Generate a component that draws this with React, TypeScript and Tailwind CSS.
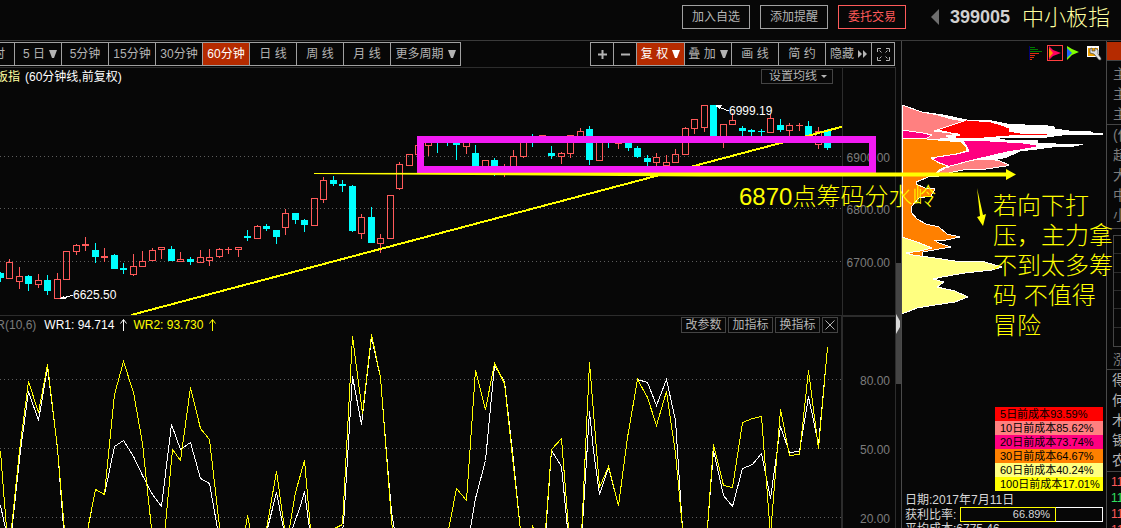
import type { ReactNode } from 'react';
import clsx from 'clsx';

// [left, high, bodyTop, bodyBottom, low, 1 = up / 0 = down]
type Candle = [number, number, number, number, number, number];

const candles: Candle[] = [
  [-3, 272, 273, 278, 282, 0], [6, 259, 262, 279, 279, 1], [16, 267, 276, 282, 289, 1],
  [25, 275, 276, 284, 291, 0], [35, 274, 280, 285, 288, 1], [44, 275, 280, 291, 295, 0],
  [54, 273, 279, 299, 299, 1], [63, 251, 251, 280, 280, 1], [73, 244, 245, 252, 255, 1],
  [82, 237, 244, 246, 251, 1], [92, 243, 250, 257, 263, 0], [101, 248, 256, 258, 262, 1],
  [111, 254, 255, 269, 269, 0], [120, 263, 268, 270, 274, 0], [130, 254, 266, 275, 276, 1],
  [139, 251, 261, 267, 267, 1], [149, 248, 250, 261, 261, 1], [158, 247, 247, 250, 259, 1],
  [168, 246, 249, 261, 261, 0], [177, 252, 259, 262, 262, 1], [187, 257, 259, 262, 265, 0],
  [197, 250, 257, 263, 263, 1], [206, 249, 257, 261, 266, 1], [216, 248, 249, 257, 258, 1],
  [225, 247, 249, 250, 254, 1], [235, 247, 247, 250, 257, 1], [244, 230, 236, 238, 241, 0],
  [254, 225, 226, 239, 239, 1], [263, 224, 226, 229, 231, 0], [273, 230, 230, 237, 244, 0],
  [282, 209, 213, 228, 235, 1], [292, 213, 213, 220, 224, 0], [301, 219, 220, 225, 232, 0],
  [311, 198, 198, 226, 226, 1], [320, 177, 180, 200, 203, 1], [330, 176, 180, 184, 186, 0],
  [339, 180, 184, 186, 192, 0], [349, 185, 186, 231, 232, 0], [358, 214, 217, 234, 239, 1],
  [368, 207, 217, 243, 243, 0], [377, 234, 238, 244, 253, 1], [387, 195, 195, 239, 239, 1],
  [396, 162, 164, 189, 190, 1], [406, 154, 154, 166, 166, 1], [415, 145, 145, 155, 155, 1],
  [425, 140, 141, 146, 156, 1], [434, 138, 138, 142, 153, 0], [444, 138, 138, 142, 146, 0],
  [453, 138, 138, 145, 160, 0], [463, 138, 139, 147, 154, 1], [472, 145, 153, 168, 168, 0],
  [482, 160, 160, 170, 170, 1], [491, 158, 160, 168, 176, 0], [501, 164, 167, 171, 177, 1],
  [510, 150, 156, 170, 170, 1], [520, 138, 138, 157, 158, 1], [529, 134, 137, 142, 147, 0],
  [539, 135, 135, 142, 142, 1], [548, 146, 153, 156, 159, 0], [558, 152, 153, 157, 164, 1],
  [567, 135, 135, 154, 158, 1], [577, 128, 131, 137, 137, 1], [586, 126, 129, 160, 165, 0],
  [596, 138, 140, 161, 161, 1], [605, 138, 138, 142, 148, 0], [615, 138, 139, 144, 149, 1],
  [625, 138, 140, 148, 151, 0], [634, 146, 148, 157, 158, 0], [644, 155, 158, 162, 166, 0],
  [653, 153, 157, 163, 166, 1], [663, 155, 162, 166, 166, 1], [672, 149, 154, 163, 163, 1],
  [682, 127, 128, 155, 155, 1], [691, 119, 119, 129, 134, 1], [701, 105, 105, 128, 132, 1],
  [710, 105, 105, 138, 138, 0], [720, 124, 124, 142, 148, 1], [729, 113, 120, 125, 125, 1],
  [739, 126, 128, 131, 136, 0], [748, 129, 130, 132, 136, 0], [758, 129, 131, 132, 136, 0],
  [767, 114, 118, 133, 133, 1], [777, 119, 125, 130, 132, 0], [786, 123, 125, 131, 136, 1],
  [796, 123, 125, 126, 131, 1], [805, 121, 126, 136, 136, 0], [815, 127, 131, 145, 149, 1],
  [824, 129, 131, 148, 150, 0],
];

const wr1 =
  '0,505 5,528 11,532 20,450 28,391 38,420 47,367 57,448 64,540 87,530 95,489 104,494 114,446 123,440 133,456 142,475 152,494 161,506 171,424 180,449 190,442 200,478 209,483 217,528 222,540 264,540 276,492 283,528 288,540 292,528 300,505 304,491 309,528 312,540 340,540 343,524 352,376 361,424 371,337 380,377 387,465 391,511 395,535 468,540 475,498 485,460 494,365 504,381 513,460 521,540 545,535 551,450 561,466 567,528 569,540 581,540 589,411 593,450 599,494 608,467 618,505 627,437 637,379 647,382 656,405 666,379 675,420 682,528 683,540 706,540 713,450 723,495 732,506 742,468 752,464 761,453 770,498 780,426 789,452 799,451 808,396 818,444 827,347';

const wr2 =
  '0,451 6,528 9,540 11,528 19,450 28,381 38,412 47,364 57,448 64,530 68,545 84,545 95,489 104,494 114,394 123,361 133,392 142,443 151,528 153,545 163,545 172,449 180,460 190,387 200,428 209,439 219,526 224,545 243,540 247,515 252,540 264,540 276,471 284,528 287,540 295,492 304,460 311,540 330,530 342,524 352,336 362,413 371,334 380,377 391,520 394,545 446,540 456,488 466,500 475,370 485,409 494,363 504,383 520,530 522,540 529,540 532,525 538,545 545,530 551,449 561,438 569,540 581,535 589,362 599,487 608,466 618,505 627,437 637,379 647,397 656,425 666,391 675,453 682,528 683,545 706,540 713,444 723,485 732,487 742,422 752,418 761,416 770,535 780,409 789,455 799,454 808,370 818,448 827,347';

const periods = ['5分钟', '15分钟', '30分钟', '60分钟', '日 线', '周 线', '月 线'];

const costs = [
  { days: 5, value: '93.59%', color: 'bg-[#ff0000]' },
  { days: 10, value: '85.62%', color: 'bg-[#ff8080]' },
  { days: 20, value: '73.74%', color: 'bg-[#ff0080]' },
  { days: 30, value: '64.67%', color: 'bg-[#ff8000]' },
  { days: 60, value: '40.24%', color: 'bg-[#ffff80]' },
  { days: 100, value: '17.01%', color: 'bg-[#ffff00]' },
];

const Down = ({ className = 'w-2 h-2' }: { className?: string }) => (
  <svg viewBox="0 0 8 8" className={clsx('shrink-0 fill-current', className)} aria-hidden="true">
    <path d="M0 0h8L5 8H3z" />
  </svg>
);

const ArrowUp = () => (
  <svg width="7" height="12" viewBox="0 0 7 12" fill="none" stroke="currentColor" aria-hidden="true">
    <path d="M3.5 12V1M.5 4.500l3-4 3 4" />
  </svg>
);

const ToolButton = ({ className, active, children }: { className: string; active?: boolean; children: ReactNode }) => (
  <button
    className={clsx(
      'flex shrink-0 items-center justify-center gap-1 overflow-hidden whitespace-nowrap border-r border-[#a0a0a0]',
      active ? 'bg-[#b52b00] text-white' : 'text-[#b4b4b4]',
      className
    )}
  >
    {children}
  </button>
);

const HeaderButton = ({ danger, children }: { danger?: boolean; children: ReactNode }) => (
  <button
    className={clsx(
      'h-6 w-[68px] border text-xs',
      danger ? 'border-[#ff5a5a] text-[#ff5a5a]' : 'border-[#a0a0a0] text-[#b4b4b4]'
    )}
  >
    {children}
  </button>
);

const Header = () => (
  <header className="flex h-[41px] shrink-0 items-start justify-end border-b border-[#3a3a3a] pr-[11px]">
    <div className="flex gap-[10px] pt-[5px]">
      <HeaderButton>加入自选</HeaderButton>
      <HeaderButton>添加提醒</HeaderButton>
      <HeaderButton danger>委托交易</HeaderButton>
    </div>
    <div className="ml-[25px] flex h-[34px] items-center">
      <button aria-label="上一个">
        <svg width="8" height="16" viewBox="0 0 8 16" className="fill-[#6e6e6e]">
          <path d="M8 0v16L0 8z" />
        </svg>
      </button>
      <span className="ml-[11px] text-lg font-bold text-[#d0d0d0]">399005</span>
      <h1 className="ml-[12px] text-[22px] font-light text-[#ffffa0]">中小板指</h1>
    </div>
  </header>
);

const Toolbar = () => (
  <div className="mt-px flex h-6 shrink-0 justify-between pr-px text-xs">
    <div className="flex border-y border-[#a0a0a0]">
      <ToolButton className="w-[15px] justify-end pr-[9px]">分时</ToolButton>
      <ToolButton className="w-[47px] pl-1">5 日 <Down /></ToolButton>
      {periods.map((p) => (
        <ToolButton key={p} className="w-[47px]" active={p === '60分钟'}>{p}</ToolButton>
      ))}
      <ToolButton className="w-[70px]">更多周期 <Down /></ToolButton>
    </div>
    <div className="flex border-y border-l border-[#a0a0a0]">
      <ToolButton className="w-[23px]">
        <svg width="9" height="9" className="fill-current" aria-label="放大"><path d="M0 3.500h9v2H0zM3.500 0h2v9h-2z" /></svg>
      </ToolButton>
      <ToolButton className="w-[23px]">
        <svg width="9" height="9" className="fill-current" aria-label="缩小"><path d="M0 3.500h9v2H0z" /></svg>
      </ToolButton>
      <ToolButton className="w-[48px]" active>复 权 <Down /></ToolButton>
      <ToolButton className="w-[47px]">叠 加 <Down /></ToolButton>
      <ToolButton className="w-[47px]">画 线</ToolButton>
      <ToolButton className="w-[47px]">简 约</ToolButton>
      <ToolButton className="w-[46px]">
        隐藏
        <svg width="9" height="8" className="fill-current" aria-hidden="true"><path d="M0 0l4 4-4 4zM5 0l4 4-4 4z" /></svg>
      </ToolButton>
      <ToolButton className="w-[23px]">
        <svg width="13" height="13" fill="none" stroke="currentColor" aria-label="全屏">
          <path d="M.5 4V.5H4M2.500 2.500l2 2M9 .5h3.500V4M10.500 2.500l-2 2M.5 9v3.500H4M2.500 10.500l2-2M12.500 9v3.500H9M10.500 10.500l-2-2" />
        </svg>
      </ToolButton>
    </div>
  </div>
);

const Grid = ({ rows }: { rows: number[] }) => (
  <>
    {rows.map((y) => (
      <line key={y} x1="0" x2="100%" y1={y + 0.5} y2={y + 0.5} stroke="#5c5c5c" strokeDasharray="1 3" />
    ))}
  </>
);

const CandleShape = ({ c }: { c: Candle }) => {
  const [x, high, top, bottom, low, up] = c;
  const color = up ? '#ff5a5a' : '#00ffff';
  const hollow = up && bottom - top > 2;
  return (
    <g fill={color}>
      {top > high && <rect x={x + 3} y={high} width="1" height={top - high} />}
      {low > bottom && <rect x={x + 3} y={bottom} width="1" height={low - bottom} />}
      {hollow ? (
        <rect x={x + 0.5} y={top + 0.5} width="6" height={bottom - top - 1} fill="none" stroke={color} />
      ) : (
        <rect x={x} y={top} width="7" height={bottom - top} />
      )}
    </g>
  );
};

const Axis = ({ top, labels }: { top: number; labels: [number, string][] }) => (
  <svg className="h-full w-[53px] shrink-0 border-l border-[#2c2c2c]" viewBox={`842 ${top} 52 247`} preserveAspectRatio="xMinYMin slice">
    {labels.map(([y, text]) => (
      <text key={text} x="889" y={y + 5} textAnchor="end" fontSize="12" fill="#7c7c7c">{text}</text>
    ))}
  </svg>
);

const PriceChart = () => (
  <section className="relative flex h-[248px] shrink-0 border-t border-[#2c2c2c]">
    <svg className="h-full min-w-0 flex-1" viewBox="0 68 842 247" preserveAspectRatio="xMinYMin slice" shapeRendering="crispEdges">
      <Grid rows={[156, 208, 261]} />
      {candles.map((c) => <CandleShape key={c[0]} c={c} />)}
      <path d="M131 315L843 126.500" stroke="#ffff00" strokeWidth="2" />
      <path d="M60 299l13-4M716 106l13 5" stroke="#fff" />
      <path d="M59 299l5-3 2 3zM715 105h7l-2 4z" fill="#fff" />
      <text x="73" y="299" fontSize="12" fill="#fff">6625.50</text>
      <text x="729" y="115" fontSize="12" fill="#fff">6999.19</text>
    </svg>
    <Axis top={68} labels={[[157, '6900.00'], [209, '6800.00'], [262, '6700.00']]} />
    <div className="absolute inset-x-0 top-0 flex items-start justify-between pr-[62px] text-xs">
      <p className="-ml-7 whitespace-nowrap leading-[18px] text-white">
        <span className="mr-[5px] text-[#ffffa0]">中小板指</span>
        (60分钟线,前复权)
      </p>
      <div className="mt-px flex h-[15px] w-[72px] items-center border border-[#444] pl-[7px] pr-[5px] text-[#b4b4b4]">
        <select aria-label="设置均线" className="w-[52px] appearance-none bg-transparent leading-[13px] outline-none">
          <option>设置均线</option>
        </select>
        <svg width="6" height="3" className="shrink-0 fill-current" aria-hidden="true"><path d="M0 0h6L3 3z" /></svg>
      </div>
    </div>
  </section>
);

const IndicatorChart = () => (
  <section className="relative flex min-h-0 flex-1 border-t border-[#2c2c2c]">
    <svg className="h-[247px] min-w-0 flex-1" viewBox="0 316 842 247" preserveAspectRatio="xMinYMin slice" shapeRendering="crispEdges">
      <Grid rows={[379, 448, 517]} />
      <g fill="none" transform="translate(.5 .5)">
        <polyline points={wr1} stroke="#fff" />
        <polyline points={wr2} stroke="#ffff00" />
      </g>
    </svg>
    <div className="h-[247px] shrink-0 border-l border-t border-[#2c2c2c]">
      <Axis top={317} labels={[[380, '80.00'], [449, '50.00'], [518, '20.00']]} />
    </div>
    <div className="absolute inset-x-0 top-0 flex items-start justify-between pr-[57px] text-xs">
      <p className="-ml-[15px] flex h-[18px] items-center whitespace-nowrap text-white">
        <span className="text-[#7c7c7c]">WR(10,6)</span>
        <span className="ml-2 mr-[6px]">WR1: 94.714</span>
        <ArrowUp />
        <span className="ml-[6px] mr-[6px] text-[#ffff00]">WR2: 93.730</span>
        <span className="text-[#ffff00]"><ArrowUp /></span>
      </p>
      <div className="mt-px flex h-4 gap-[2px] text-[#b4b4b4]">
        {['改参数', '加指标', '换指标'].map((label) => (
          <button key={label} className="w-[45px] border border-[#444] leading-[14px]">{label}</button>
        ))}
        <button aria-label="关闭" className="flex w-4 items-center justify-center border border-[#444]">
          <svg width="10" height="10" stroke="currentColor"><path d="M.5.5l9 9M9.500.5l-9 9" /></svg>
        </button>
      </div>
    </div>
  </section>
);

const ChipIcons = () => (
  <div className="flex h-[23px] shrink-0 items-center justify-end gap-1 pr-1 pt-[1px]">
    <button aria-label="筹码分布">
      <svg width="14" height="16" viewBox="0 0 14 16" shapeRendering="crispEdges">
        <path d="M0 1h1v14H0z" fill="#000070" />
        <path d="M1 2h5v1H1zM1 4h8v1H1zM1 6h12v1H1z" fill="#007a00" />
        <path d="M1 8h9v1H1zM1 10h5v1H1zM1 12h4v1H1zM1 14h2v1H1z" fill="#e03010" />
      </svg>
    </button>
    <button aria-label="火焰山" className="border border-[#ff4040]">
      <svg width="14" height="14" viewBox="0 0 14 14">
        <path d="M1 0l4 4 8 3-8 3-4 4z" fill="#ff0060" />
        <path d="M1 2l4 5-4 5z" fill="#ff9000" />
      </svg>
    </button>
    <button aria-label="活跃度" className="mr-px">
      <svg width="14" height="16" viewBox="0 0 14 16">
        <path d="M0 1l5 3 7 3-7 3-5 5z" fill="#80ff00" />
        <path d="M0 3l5 5-5 5z" fill="#2060ff" />
      </svg>
    </button>
    <button aria-label="设置">
      <svg width="16" height="16" viewBox="0 0 16 16">
        <path d="M1 1h12v11H1z" fill="#fff" />
        <path d="M2 3h10v8H2z" fill="#f0a000" />
        <path d="M4 8V4l2-1v3h3V3l3 2v4l3 4v2h-2L8 9z" fill="#e0e0e0" stroke="#444" strokeWidth=".7" />
      </svg>
    </button>
  </div>
);

const ChipDistribution = () => (
  <svg className="h-[250px] w-[204px] shrink-0" viewBox="902 64 204 250" stroke="#fff" shapeRendering="crispEdges">
    <path d="M902 105l20 7 21 3 24 5 25 1 15 3 18 1h17l12 2 1 2 14 2 22 1 2 1 10 1h-13l-28 1-15 2h-38l-15 1 11 2 32 1v2l19 1h27l-9 2-22 1-15 2-17 2-13 6-13 3-51 15h-42z" fill="#fff" />
    <path d="M944 116l23 4 24 2 10 3 8 3v3l11 2 27 1v1l-38 1-25 2h-34l-8-2 18-1-13-3-11-2 14-5 16-5z" fill="#f00" />
    <path d="M902 105l20 7 16 3 14 4 12 2-9 3-15 5-6 2 24 3-12 2 10 1-24 3h-30z" fill="#ff8080" />
    <path d="M947 167l12-4 15-3 16-1 10 2 9 4-3 1-20 3-23 1-10 2-14 4h-7zM1033 145h16l2 1-10 1z" fill="#ff8080" />
    <path d="M902 130l21 3 9 2-5 3h-25z" fill="#ff0080" />
    <path d="M962 140l28 1 33 2 14 2-1 2-16 3-13 2-17 4-17 4-23 6-3 2-4-4-11-4 5-3 20-3 12-3-3-6z" fill="#ff0080" />
    <path d="M902 138l25 1 34 3 5 5 1 4-11 3-25 4 8 5 9 3-9 4-3 3-10 5-10 4v2l9 4 10 1-4 7-12 2-8 9v5l6 7 9 5 13 3 8 7 13 3-14 3h-12l5 3 12 4-12 2-16 3-1 4 7 2-10 1h-17z" fill="#ff8000" />
    <path d="M902 237l15 5 15 6-12 3-14 2 7 2 22 3 20 3 30 1 17 5-10 3-27 3-23 4-9 2 11 3-7 5 18 4 13 6-13 5-20 3-18 3-10 4-6 2z" fill="#ffff80" />
  </svg>
);

const ChipPanel = () => (
  <aside className="flex w-[205px] shrink-0 flex-col overflow-hidden border-l border-[#4a4a4a]">
    <ChipIcons />
    <ChipDistribution />
    <ul className="ml-auto mr-[3px] mt-[93px] w-[108px] shrink-0 text-[11px] leading-[14px] text-black">
      {costs.map((c) => (
        <li key={c.days} className={clsx('whitespace-nowrap pl-[5px]', c.color)}>{c.days}日前成本{c.value}</li>
      ))}
    </ul>
    <div className="mt-[2px] shrink-0 pl-[3px] text-xs leading-[14px] text-[#d8d8d8]">
      <p>日期:2017年7月11日</p>
      <div className="flex items-center">
        <span className="w-[55px]">获利比率:</span>
        <div className="relative flex h-[15px] w-[143px] border border-white">
          <div className="-my-px -ml-px w-[96px] border border-[#ffff00]" />
          <span className="absolute inset-0 text-center text-[11px] leading-[13px]">66.89%</span>
        </div>
      </div>
      <p>平均成本:6775.46</p>
    </div>
  </aside>
);

const SidePanel = () => (
  <aside className="flex w-[15px] shrink-0 flex-col overflow-hidden border-l border-[#4a4a4a] text-sm leading-5 text-[#7c7c7c]">
    <div className="mt-px h-[19px] shrink-0 border-b border-[#444] bg-[#b52b00]" />
    <div className="shrink-0 border-b border-[#444] pl-[6px] pt-[3px]">
      {['主力', '主买', '主卖'].map((t) => <p key={t} className="w-10">{t}</p>)}
    </div>
    <div className="h-[104px] shrink-0 border-b border-[#444] pl-[6px]">
      {['(供', '超大', '大单', '中单', '小单'].map((t) => <p key={t} className="w-10">{t}</p>)}
    </div>
    <div className="ml-[6px] mt-[6px] grid h-[112px] shrink-0 grid-rows-6 divide-y divide-[#2c2c2c] border-y border-l border-[#444]">
      {[0, 1, 2, 3, 4, 5].map((i) => <div key={i} />)}
    </div>
    <p className="mt-[2px] w-10 shrink-0 pl-[6px]">涨</p>
    <div className="h-[103px] shrink-0 border-y border-[#444] pl-[5px] text-[#b4b4b4]">
      {['得', '何', '木', '锡', '农'].map((t) => <p key={t} className="w-10">{t}</p>)}
    </div>
    <div className="pl-1 text-xs leading-4 text-[#ff5a5a]">
      <p className="mt-[2px]">11:</p>
      <p className="text-[#30e060]">11:</p>
      <p>11:</p>
      <p>11:</p>
    </div>
  </aside>
);

// drawn notes that run over the chart and the chip panel
const Annotations = () => (
  <div className="pointer-events-none absolute inset-0 overflow-hidden text-2xl font-light text-[#ffff00]">
    <svg className="absolute inset-0 h-full w-full">
      <g transform="translate(0 -41)">
        <rect x="420.500" y="139.500" width="452" height="30" fill="none" stroke="#f31bf3" strokeWidth="7" />
        <path d="M314 173L700 172.500H1006V169L1016 174.500L1006 180V176.500H700L314 174z" fill="#ffff00" />
        <path d="M977 188l6 27 3-1-3 12-6-9 3-1z" fill="#ffff00" />
      </g>
    </svg>
    <p className="absolute left-[739px] top-[141px] whitespace-nowrap leading-[30px]">6870点筹码分水岭</p>
    <p className="absolute left-[993px] top-[150px] whitespace-nowrap leading-[30px]">
      若向下打<br />压，主力拿<br />不到太多筹<br />码 不值得<br />冒险
    </p>
  </div>
);

const App = () => {
  return (
    <div className="flex h-screen flex-col overflow-hidden bg-[#070707] font-['Liberation_Sans','Noto_Sans_CJK_SC',sans-serif]">
      <Header />
      <div className="relative flex min-h-0 flex-1">
        <main className="flex min-w-0 flex-1 flex-col overflow-hidden">
          <Toolbar />
          <div className="mt-px flex min-h-0 flex-1 flex-col border-r border-[#2c2c2c]">
            <PriceChart />
            <IndicatorChart />
          </div>
        </main>
        <div className="flex w-[5px] shrink-0 flex-col pt-[222px]">
          <div className="h-[121px] bg-[#444] pt-[51px]">
            <svg width="5" height="20" className="fill-[#d8d8d8]"><path d="M0 0l4 7v6l-4 7z" /></svg>
          </div>
        </div>
        <ChipPanel />
        <SidePanel />
        <Annotations />
      </div>
    </div>
  );
};

export default App;
